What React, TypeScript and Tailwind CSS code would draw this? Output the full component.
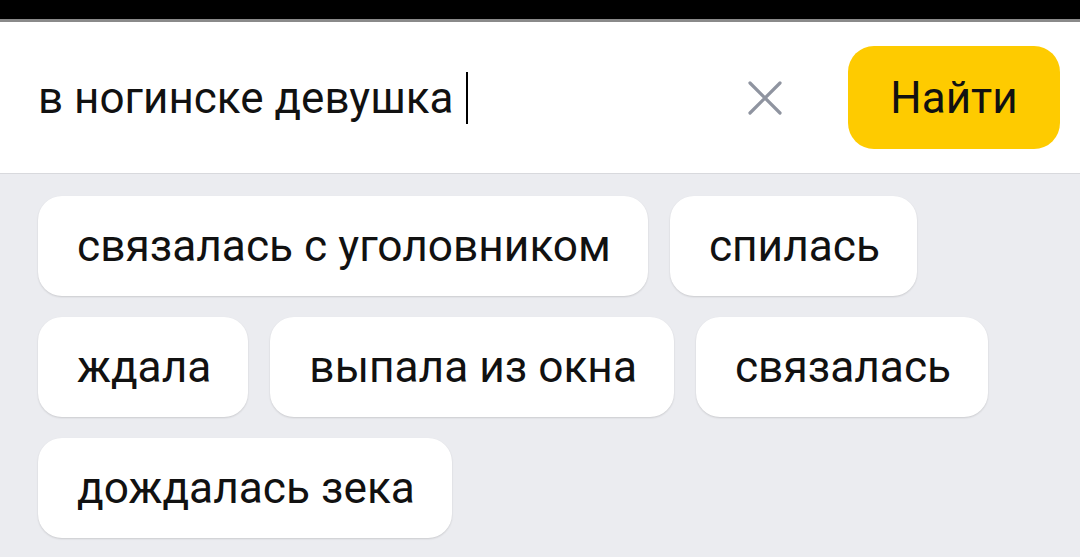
const SUGGESTIONS = [
  ["связалась с уголовником", "спилась"],
  ["ждала", "выпала из окна", "связалась"],
  ["дождалась зека"],
];

function Chip({ label }: { label: string }) {
  return (
    <button className="h-[100px] rounded-[24px] bg-white pl-[39px] pr-[37px] text-[44.25px] leading-none text-[#111] shadow-[0_1px_2px_rgba(0,0,0,0.14)]">
      {label}
    </button>
  );
}

export default function App() {
  return (
    <div
      className="flex h-[557px] w-[1080px] flex-col overflow-hidden bg-[#ebecf0]"
      style={{ fontFamily: "Roboto, 'Noto Sans', sans-serif" }}
    >
      <div className="h-[19px] shrink-0 bg-black" />
      <div className="h-[3px] shrink-0 bg-[#8a8a8a]" />

      <div className="flex h-[152px] shrink-0 items-center border-b border-[#d8d9dd] bg-white pl-[38px] pr-[20px]">
        <div className="flex flex-1 items-center">
          <span className="text-[44px] leading-none text-[#111]">в ногинске девушка</span>
          <span className="ml-[13px] h-[52px] w-[2px] bg-black" />
        </div>
        <button className="mr-[66px] flex h-[34px] w-[34px] items-center justify-center text-[#8f94a0]">
          <svg width="34" height="34" viewBox="0 0 34 34" fill="none">
            <path d="M2 2L32 32M32 2L2 32" stroke="currentColor" strokeWidth="3.2" strokeLinecap="round" />
          </svg>
        </button>
        <button className="h-[103px] w-[212px] rounded-[26px] bg-[#fecb00] text-[44px] leading-none text-[#111]">
          Найти
        </button>
      </div>

      <div className="flex flex-col gap-[21px] pl-[38px] pt-[22px]">
        {SUGGESTIONS.map((row, i) => (
          <div key={i} className="flex gap-[22px]">
            {row.map((s) => (
              <Chip key={s} label={s} />
            ))}
          </div>
        ))}
      </div>
    </div>
  );
}
